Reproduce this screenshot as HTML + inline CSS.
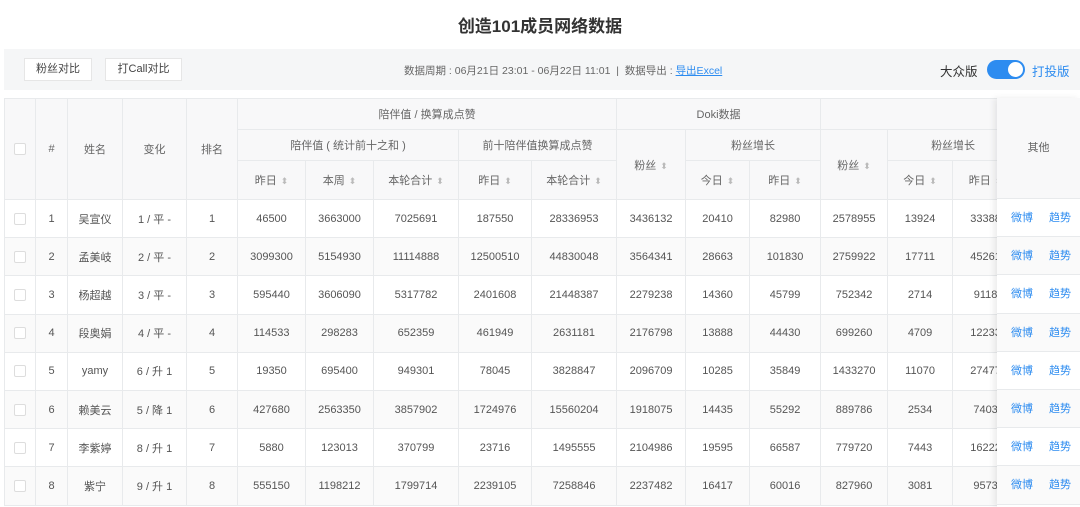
<!DOCTYPE html>
<html><head><meta charset="utf-8"><style>
*{margin:0;padding:0;box-sizing:border-box}
body{width:1080px;height:507px;overflow:hidden;background:#fff;font-family:"Liberation Sans","Noto Sans CJK SC",sans-serif;color:#555;position:relative}
.title{position:absolute;top:12px;left:0;width:1080px;text-align:center;font-size:17px;font-weight:bold;color:#333}
.bar{position:absolute;left:4px;top:49px;width:1076px;height:41px;background:#f5f6f7}
.btn{position:absolute;top:9px;height:23px;background:#fff;border:1px solid #e6e6e6;font-size:11px;color:#444;line-height:21px;text-align:center}
.info{position:absolute;left:400px;top:14px;font-size:10.5px;color:#666}
.info a{color:#2d8cf0;text-decoration:underline}
.sw{position:absolute;left:936px;top:12px;font-size:12.5px;color:#333}
.tog{position:absolute;left:983px;top:11px;width:38px;height:19px;border-radius:10px;background:#2d8cf0}
.tog i{position:absolute;right:2px;top:2px;width:15px;height:15px;border-radius:50%;background:#fff}
.sw2{position:absolute;left:1028px;top:12px;font-size:12.5px;color:#2d8cf0}
.wrap{position:absolute;left:4px;top:98px;width:993px;height:409px;overflow:hidden}
table{border-collapse:collapse;table-layout:fixed;width:1014px}
td,th{border:1px solid #e8eaec;text-align:center;font-size:11px;font-weight:normal;white-space:nowrap;overflow:hidden}
th{background:#f8f8f9;color:#666}
tr.h1 th,tr.h2 th{height:31px}
tr.h3 th{height:39px}
tbody td{height:38.2px;color:#555}
tbody tr:nth-child(even) td{background:#fafafa}
.cb{display:inline-block;width:12px;height:12px;border:1px solid #ddd;border-radius:2px;background:#fff;vertical-align:middle}
.s{color:#bbb;font-size:9px;margin-left:4px}
.fix{position:absolute;left:997px;top:98px;width:83px;height:409px;background:#fff;box-shadow:-3px 0 6px rgba(0,0,0,.08)}
.fix .hd{height:101px;background:#f8f8f9;border-bottom:1px solid #e8eaec;font-size:11px;color:#666;text-align:center;line-height:101px}
.fix .r{height:38.2px;border-bottom:1px solid #e8eaec;font-size:11px;color:#2d8cf0;line-height:38px;padding-left:14px;word-spacing:0}
.fix .r:nth-child(odd){background:#fafafa}
.fix .r span{margin-right:16px}
</style></head><body>
<div class="title">创造101成员网络数据</div>
<div class="bar">
<div class="btn" style="left:20px;width:68px">粉丝对比</div>
<div class="btn" style="left:101px;width:77px">打Call对比</div>
<div class="info">数据周期 : 06月21日 23:01 - 06月22日 11:01 &nbsp;|&nbsp; 数据导出 : <a>导出Excel</a></div>
<div class="sw">大众版</div><div class="tog"><i></i></div><div class="sw2">打投版</div>
</div>
<div class="wrap"><table>
<colgroup><col style="width:31px"><col style="width:32px"><col style="width:55px"><col style="width:64px"><col style="width:51px"><col style="width:68px"><col style="width:68px"><col style="width:85px"><col style="width:73px"><col style="width:85px"><col style="width:69px"><col style="width:64px"><col style="width:71px"><col style="width:67px"><col style="width:65px"><col style="width:66px"></colgroup>
<thead>
<tr class="h1"><th rowspan="3"><span class="cb"></span></th><th rowspan="3">#</th><th rowspan="3">姓名</th><th rowspan="3">变化</th><th rowspan="3">排名</th><th colspan="5">陪伴值 / 换算成点赞</th><th colspan="3">Doki数据</th><th colspan="3"></th></tr>
<tr class="h2"><th colspan="3">陪伴值 ( 统计前十之和 )</th><th colspan="2">前十陪伴值换算成点赞</th><th rowspan="2">粉丝<span class="s">⬍</span></th><th colspan="2">粉丝增长</th><th rowspan="2">粉丝<span class="s">⬍</span></th><th colspan="2">粉丝增长</th></tr>
<tr class="h3"><th>昨日<span class="s">⬍</span></th><th>本周<span class="s">⬍</span></th><th>本轮合计<span class="s">⬍</span></th><th>昨日<span class="s">⬍</span></th><th>本轮合计<span class="s">⬍</span></th><th>今日<span class="s">⬍</span></th><th>昨日<span class="s">⬍</span></th><th>今日<span class="s">⬍</span></th><th>昨日<span class="s">⬍</span></th></tr>
</thead>
<tbody>
<tr><td><span class="cb"></span></td><td>1</td><td>吴宣仪</td><td>1 / 平 -</td><td>1</td><td>46500</td><td>3663000</td><td>7025691</td><td>187550</td><td>28336953</td><td>3436132</td><td>20410</td><td>82980</td><td>2578955</td><td>13924</td><td>33388</td></tr>
<tr><td><span class="cb"></span></td><td>2</td><td>孟美岐</td><td>2 / 平 -</td><td>2</td><td>3099300</td><td>5154930</td><td>11114888</td><td>12500510</td><td>44830048</td><td>3564341</td><td>28663</td><td>101830</td><td>2759922</td><td>17711</td><td>45261</td></tr>
<tr><td><span class="cb"></span></td><td>3</td><td>杨超越</td><td>3 / 平 -</td><td>3</td><td>595440</td><td>3606090</td><td>5317782</td><td>2401608</td><td>21448387</td><td>2279238</td><td>14360</td><td>45799</td><td>752342</td><td>2714</td><td>9118</td></tr>
<tr><td><span class="cb"></span></td><td>4</td><td>段奥娟</td><td>4 / 平 -</td><td>4</td><td>114533</td><td>298283</td><td>652359</td><td>461949</td><td>2631181</td><td>2176798</td><td>13888</td><td>44430</td><td>699260</td><td>4709</td><td>12233</td></tr>
<tr><td><span class="cb"></span></td><td>5</td><td>yamy</td><td>6 / 升 1</td><td>5</td><td>19350</td><td>695400</td><td>949301</td><td>78045</td><td>3828847</td><td>2096709</td><td>10285</td><td>35849</td><td>1433270</td><td>11070</td><td>27477</td></tr>
<tr><td><span class="cb"></span></td><td>6</td><td>赖美云</td><td>5 / 降 1</td><td>6</td><td>427680</td><td>2563350</td><td>3857902</td><td>1724976</td><td>15560204</td><td>1918075</td><td>14435</td><td>55292</td><td>889786</td><td>2534</td><td>7403</td></tr>
<tr><td><span class="cb"></span></td><td>7</td><td>李紫婷</td><td>8 / 升 1</td><td>7</td><td>5880</td><td>123013</td><td>370799</td><td>23716</td><td>1495555</td><td>2104986</td><td>19595</td><td>66587</td><td>779720</td><td>7443</td><td>16222</td></tr>
<tr><td><span class="cb"></span></td><td>8</td><td>紫宁</td><td>9 / 升 1</td><td>8</td><td>555150</td><td>1198212</td><td>1799714</td><td>2239105</td><td>7258846</td><td>2237482</td><td>16417</td><td>60016</td><td>827960</td><td>3081</td><td>9573</td></tr>
</tbody></table></div>
<div class="fix"><div class="hd">其他</div>
<div class="r" style="background:#fff"><span>微博</span>趋势</div>
<div class="r" style="background:#fafafa"><span>微博</span>趋势</div>
<div class="r" style="background:#fff"><span>微博</span>趋势</div>
<div class="r" style="background:#fafafa"><span>微博</span>趋势</div>
<div class="r" style="background:#fff"><span>微博</span>趋势</div>
<div class="r" style="background:#fafafa"><span>微博</span>趋势</div>
<div class="r" style="background:#fff"><span>微博</span>趋势</div>
<div class="r" style="background:#fafafa"><span>微博</span>趋势</div>
</div>
</body></html>
